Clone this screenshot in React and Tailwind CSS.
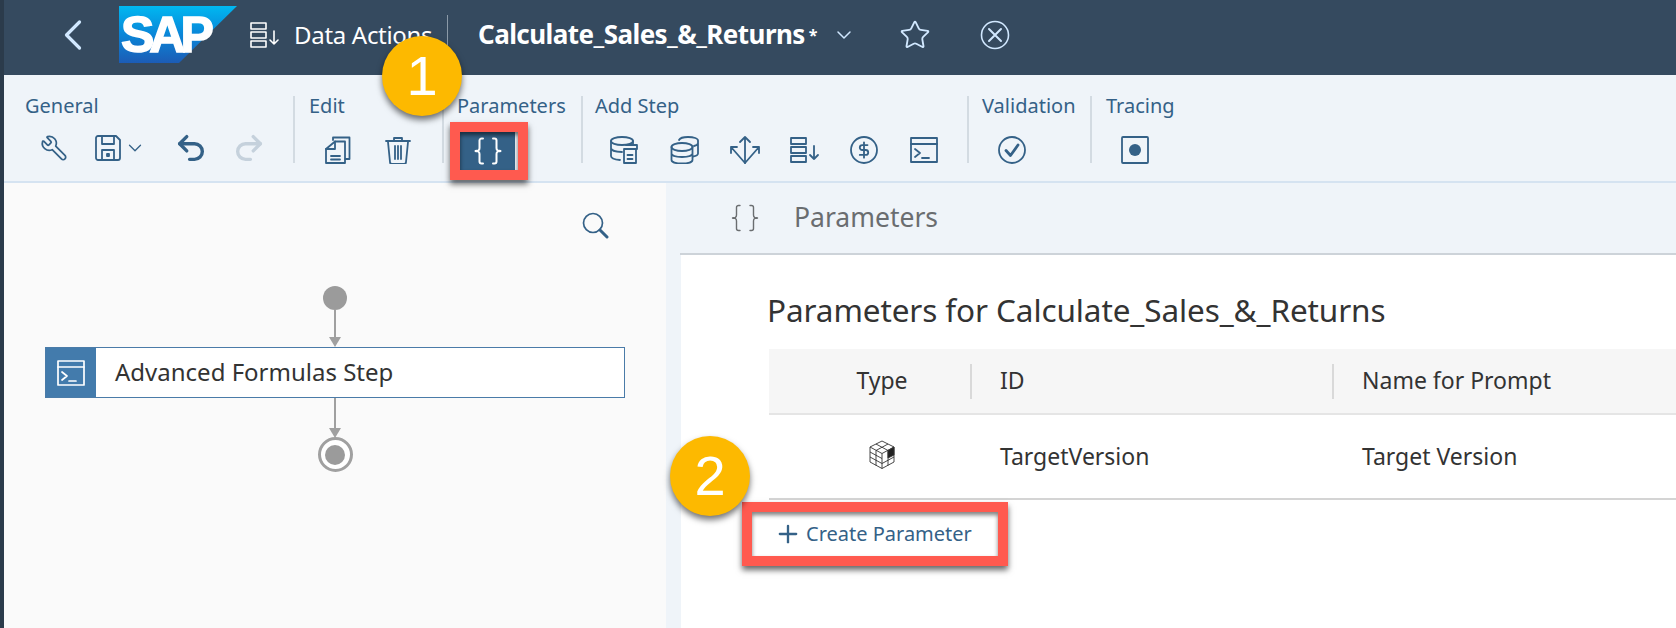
import React from 'react';
import { Wrench, Undo2, Redo2, ChevronLeft, ChevronDown, Star, Plus } from 'lucide-react';

const Ico = ({ children, w = 28, h = 28, sw = 1.8, className = '' }) => (
  <svg width={w} height={h} viewBox={`0 0 ${w} ${h}`} fill="none" stroke="currentColor" strokeWidth={sw} strokeLinecap="round" strokeLinejoin="round" className={className}>
    {children}
  </svg>
);

const DataActionsIcon = ({ sw = 1.8 }) => (
  <Ico w={30} h={26} sw={sw}>
    <rect x="1" y="1" width="15" height="6" />
    <rect x="1" y="10" width="15" height="6" />
    <rect x="1" y="19" width="15" height="6" />
    <path d="M24 9v13M20 18l4 4 4-4" />
  </Ico>
);

const Save = () => (
  <Ico>
    <path d="M4 2h18l4 4v18a2 2 0 0 1-2 2H4a2 2 0 0 1-2-2V4a2 2 0 0 1 2-2z" />
    <path d="M8 2v8h12V2M8 26v-10h12v10" />
    <rect x="13" y="20" width="2" height="2" fill="currentColor" />
  </Ico>
);
const Copy = () => (
  <Ico>
    <path d="M10 4V1.500h16.500V23h-4" />
    <path d="M12 5.500h10V27H3V13z" />
    <path d="M12 5.500V13H3M8 20h9M8 23.500h9" />
  </Ico>
);
const Trash = () => (
  <Ico>
    <path d="M2 5h24M10 4V2h8v2" />
    <path d="M4 6l2 20a2 2 0 0 0 2 2h12a2 2 0 0 0 2-2l2-20" />
    <path d="M11 10v13M14 10v13M17 10v13" />
  </Ico>
);
const Braces = ({ sw = 1.8, className = '' }) => (
  <Ico sw={sw} className={className}>
    <path d="M9 1.500H7.500a2 2 0 0 0-2 2v7.500a3 3 0 0 1-4 3 3 3 0 0 1 4 3v7.500a2 2 0 0 0 2 2H9" />
    <path d="M19 1.500h1.500a2 2 0 0 1 2 2v7.500a3 3 0 0 0 4 3 3 3 0 0 0-4 3v7.500a2 2 0 0 1-2 2H19" />
  </Ico>
);
const DbDoc = () => (
  <Ico w={32} h={28}>
    <ellipse cx="12" cy="5" rx="11" ry="4" />
    <path d="M1 5v15c0 2 3 3.500 9 4M1 12c0 2.500 5 4 11 4M23 5v4" />
    <path d="M16 9h11v4M14 13h12v14H14z" />
    <path d="M17.500 19h5M17.500 23h5" />
  </Ico>
);
const DbStack = () => (
  <Ico w={30} h={28}>
    <ellipse cx="12" cy="11" rx="10.500" ry="4" />
    <path d="M1.500 11v13c0 2 4.500 3.500 10.500 3.500S22.500 26 22.500 24V11M1.500 17.500c0 2 4.500 3.500 10.500 3.500s10.500-1.500 10.500-3.500" />
    <path d="M9 4c1-2 5-3 9-3 6 0 10 1.500 10 3.500v13c0 1.500-2 2.500-5 3M24 10c2.500-.5 4-1.500 4-3" />
  </Ico>
);
const Arrows = () => (
  <Ico w={30} h={28}>
    <path d="M15 1v26M10 6l5-5 5 5" />
    <path d="M1 11l14 16L29 11M1 11v6M1 11h6M29 11v6M29 11h-6" />
  </Ico>
);
const Dollar = () => (
  <Ico>
    <circle cx="14" cy="14" r="13" />
    <g transform="translate(5.600 5.600) scale(0.7)" strokeWidth="2.600">
      <path d="M17 5H9.500a3.500 3.500 0 0 0 0 7h5a3.500 3.500 0 0 1 0 7H6M12 1v22" />
    </g>
  </Ico>
);
const Terminal = ({ sw = 1.8 }) => (
  <Ico h={26} sw={sw}>
    <rect x="1" y="1" width="26" height="24" />
    <path d="M1 7h26M5 12l5 4-5 4M12 21h7" />
  </Ico>
);
const Check = () => (
  <Ico>
    <circle cx="14" cy="14" r="13" />
    <path d="M8 14.500l4.500 5L20 9" strokeWidth="2.800" />
  </Ico>
);
const Tracing = () => (
  <Ico>
    <rect x="1" y="1" width="26" height="26" rx="1" />
    <circle cx="14" cy="14" r="6" fill="currentColor" stroke="none" />
  </Ico>
);
const Search = () => (
  <svg width="27" height="27" viewBox="0 0 27 27" fill="none" stroke="#346187" strokeLinecap="round">
    <circle cx="11" cy="11" r="9.500" strokeWidth="1.700" />
    <path d="M18 18l7 7" strokeWidth="3" />
  </svg>
);
const Cube = () => (
  <svg width="26" height="29" viewBox="0 0 26 29" fill="none" stroke="#333" strokeWidth="0.900" strokeLinejoin="round">
    <path d="M13 1L25 7v15l-12 6.500L1 22V7z" />
    <path d="M1 7l12 6.500L25 7M13 13.500v15" />
    <path d="M7 4l12 6.500M19 4L7 10.500M1 12l12 6.500M1 17l12 6.500L25 17M7 10.500V25.500M19 10.500V25.500" />
    <path d="M19 10.500L25 7v8l-6 3z" fill="#222" />
  </svg>
);

const Slot = ({ w = 'w-[59.6px]', children }) => (
  <div className={`${w} h-[38px] flex items-center justify-center shrink-0`}>{children}</div>
);

const Group = ({ label, className, children, first }) => (
  <div className={`${className} h-[67px] flex flex-col shrink-0 ${first ? '' : 'border-l-2 border-[#d3dbe2]'}`}>
    <div className="text-[20px] leading-[20px] text-[#346187] whitespace-nowrap">{label}</div>
    <div className="flex items-center mt-[15px] h-[38px]">{children}</div>
  </div>
);

const Badge = ({ n, className }) => (
  <div className={`absolute w-[80px] h-[80px] rounded-full bg-[#fdb900] shadow-[0_4px_6px_rgba(0,0,0,0.55)] flex items-center justify-center text-white text-[56px] leading-none font-['Liberation_Sans',sans-serif] ${className}`}>
    {n}
  </div>
);

export default function App() {
  return (
    <div className="relative w-[1676px] h-[628px] overflow-hidden bg-[#eff4f9] flex flex-col border-l-[4px] border-[#2b3b4b] font-['Noto_Sans',sans-serif]">
      {/* Shell header */}
      <header className="h-[75px] shrink-0 bg-[#354a5f] flex items-center text-white">
        <div className="flex items-center w-full h-full pb-[12px] pt-[6px]">
          <ChevronLeft size={52} strokeWidth={1.5} className="ml-[43px] text-[#d1e8ff]" />
          <svg width="118" height="57" viewBox="0 0 118 57" className="ml-[20px] shrink-0">
            <defs>
              <linearGradient id="sapg" x1="0" y1="0" x2="0" y2="1">
                <stop offset="0" stopColor="#00b8f1" />
                <stop offset="0.5" stopColor="#0a86d8" />
                <stop offset="1" stopColor="#1c5cb5" />
              </linearGradient>
            </defs>
            <polygon points="0,0 118,0 60,57 0,57" fill="url(#sapg)" />
            <text x="2" y="46" fill="#fff" stroke="#fff" strokeWidth="1.500" fontFamily="'Liberation Sans',sans-serif" fontWeight="700" fontSize="50" letterSpacing="-5">SAP</text>
          </svg>
          <div className="ml-[13px] mr-[14px] text-white"><DataActionsIcon sw={1.6} /></div>
          <span className="text-[24px] text-white whitespace-nowrap w-[139px] tracking-[-0.3px]">Data Actions</span>
          <div className="w-px h-[60px] bg-[#8b9aa8] ml-[14px] self-end -mb-[12px]" />
          <span className="ml-[30px] text-[26px] font-bold whitespace-nowrap tracking-[-0.55px]">Calculate_Sales_&amp;_Returns</span>
          <span className="ml-[4px] text-[16px] font-bold">*</span>
          <ChevronDown size={24} strokeWidth={1.5} className="ml-[14px] text-[#d1e8ff]" />
          <Star size={32} strokeWidth={1.4} className="ml-[43px] text-[#d1e8ff]" />
          <svg width="30" height="30" viewBox="0 0 30 30" fill="none" stroke="#d1e8ff" strokeWidth="1.600" strokeLinecap="round" className="ml-[49px]">
            <circle cx="15" cy="15" r="13.500" />
            <path d="M9 9l12 12M21 9L9 21" strokeWidth="2" />
          </svg>
        </div>
      </header>

      {/* Toolbar */}
      <div className="h-[108px] shrink-0 flex items-start pt-[21px] border-b-2 border-[#d5e3f1] text-[#346187]">
        <Group first label="General" className="w-[289px] pl-[21px]">
          <div className="flex items-center">
            <div className="w-[58px] flex justify-center"><Wrench size={28} strokeWidth={1.5} className="-scale-x-100" /></div>
            <div className="ml-[11px] flex items-center"><Save /><ChevronDown size={22} strokeWidth={1.4} className="ml-[2px]" /></div>
            <div className="ml-[28px]"><Undo2 size={34} strokeWidth={2.4} /></div>
            <div className="ml-[24px] text-[#c5d1dc]"><Redo2 size={34} strokeWidth={2.4} /></div>
          </div>
        </Group>
        <Group label="Edit" className="w-[149px] pl-[14px]">
          <Slot w="w-[59px] -ml-[2px]"><Copy /></Slot>
          <Slot w="w-[59px] ml-[2px]"><Trash /></Slot>
        </Group>
        <Group label="Parameters" className="w-[139px] pl-[13px]">
          <div className="w-[55px] h-[38px] mt-[1px] ml-[3px] bg-[#346187] text-white flex items-center justify-center">
            <Braces sw={2} />
          </div>
        </Group>
        <Group label="Add Step" className="w-[386px] pl-[12px]">
          <div className="flex ml-[1px]">
            <Slot><DbDoc /></Slot>
            <Slot><DbStack /></Slot>
            <Slot><Arrows /></Slot>
            <Slot><DataActionsIcon /></Slot>
            <Slot><Dollar /></Slot>
            <Slot><Terminal /></Slot>
          </div>
        </Group>
        <Group label="Validation" className="w-[123px] pl-[13px]">
          <Slot w="w-[58px] ml-[1px]"><Check /></Slot>
        </Group>
        <Group label="Tracing" className="w-[120px] pl-[14px]">
          <Slot w="w-[58px]"><Tracing /></Slot>
        </Group>
      </div>

      {/* Body */}
      <div className="flex-1 flex min-h-0">
        {/* Canvas */}
        <div className="w-[662px] shrink-0 bg-[#fafafa] flex flex-col items-center relative">
          <div className="self-end mr-[57px] mt-[29px]"><Search /></div>
          <div className="w-[24px] h-[24px] rounded-full bg-[#9b9b9b] mt-[47px]" />
          <div className="w-[2px] h-[27px] bg-[#a0a0a0]" />
          <div className="w-0 h-0 border-l-[6px] border-r-[6px] border-t-[10px] border-l-transparent border-r-transparent border-t-[#a0a0a0]" />
          <div className="w-[580px] h-[51px] bg-white border border-[#4a7ba8] flex items-center shrink-0">
            <div className="w-[50px] h-full bg-[#437bac] flex items-center justify-center text-white">
              <Terminal sw={1.7} />
            </div>
            <span className="ml-[19px] -mt-[2px] text-[24px] text-[#333] whitespace-nowrap">Advanced Formulas Step</span>
          </div>
          <div className="w-[2px] h-[30px] bg-[#a0a0a0]" />
          <div className="w-0 h-0 border-l-[6px] border-r-[6px] border-t-[10px] border-l-transparent border-r-transparent border-t-[#a0a0a0]" />
          <div className="w-[35px] h-[35px] rounded-full border-[3px] border-[#a0a0a0] bg-white flex items-center justify-center -mt-[1px]">
            <div className="w-[20px] h-[20px] rounded-full bg-[#9b9b9b]" />
          </div>
        </div>

        {/* Right panel */}
        <div className="flex-1 min-w-0 flex flex-col pl-[15px]">
          <div className="h-[72px] shrink-0 flex items-center border-b-2 border-[#cdd3d9] -ml-[15px] pl-[15px] [border-image:linear-gradient(to_right,transparent_15px,#cdd3d9_15px)_1]">
            <div className="ml-[50px] text-[#6a6d70]"><Braces sw={1.4} /></div>
            <span className="ml-[35px] text-[26.500px] text-[#6a6d70]">Parameters</span>
          </div>
          <div className="flex-1 bg-white pl-[88px]">
            <h2 className="mt-[33px] -ml-[2px] h-[44px] text-[31.500px] leading-[44px] text-[#333] font-normal whitespace-nowrap tracking-[-0.1px]">Parameters for Calculate_Sales_&amp;_Returns</h2>
            <div className="mt-[17px] grid grid-cols-[201px_362px_1fr] h-[66px] bg-[#f6f6f6] border-b-2 border-[#e5e5e5] items-center text-[23px] text-[#333]">
              <div className="text-center pl-[25px] -mt-[1px]">Type</div>
              <div className="h-[35px] border-l-2 border-[#d9d9d9] pl-[28px] leading-[33px]">ID</div>
              <div className="h-[35px] border-l-2 border-[#d9d9d9] pl-[28px] leading-[33px]">Name for Prompt</div>
            </div>
            <div className="grid grid-cols-[201px_362px_1fr] h-[85px] border-b-2 border-[#d4d4d4] items-center text-[23px] text-[#333]">
              <div className="flex justify-center pl-[25px] -mt-[4px]"><Cube /></div>
              <div className="pl-[30px]">TargetVersion</div>
              <div className="pl-[30px]">Target Version</div>
            </div>
            <button className="mt-[20px] flex items-center ml-[5px] text-[20px] leading-[28px] text-[#346187]">
              <Plus size={28} strokeWidth={2} />
              <span className="ml-[4px] whitespace-nowrap">Create Parameter</span>
            </button>
          </div>
        </div>
      </div>

      {/* Annotations */}
      <div className="absolute left-[446px] top-[122px] w-[78px] h-[58px] border-[10px] border-[#ff5a4f] shadow-[0_4px_6px_rgba(0,0,0,0.6),inset_0_3px_4px_rgba(0,0,0,0.55)]" />
      <div className="absolute left-[738px] top-[502px] w-[266px] h-[64px] border-[10px] border-[#ff5a4f] shadow-[0_4px_6px_rgba(0,0,0,0.6),inset_0_3px_4px_rgba(0,0,0,0.5)]" />
      <Badge n="1" className="left-[378px] top-[36px]" />
      <Badge n="2" className="left-[666px] top-[436px]" />
    </div>
  );
}
